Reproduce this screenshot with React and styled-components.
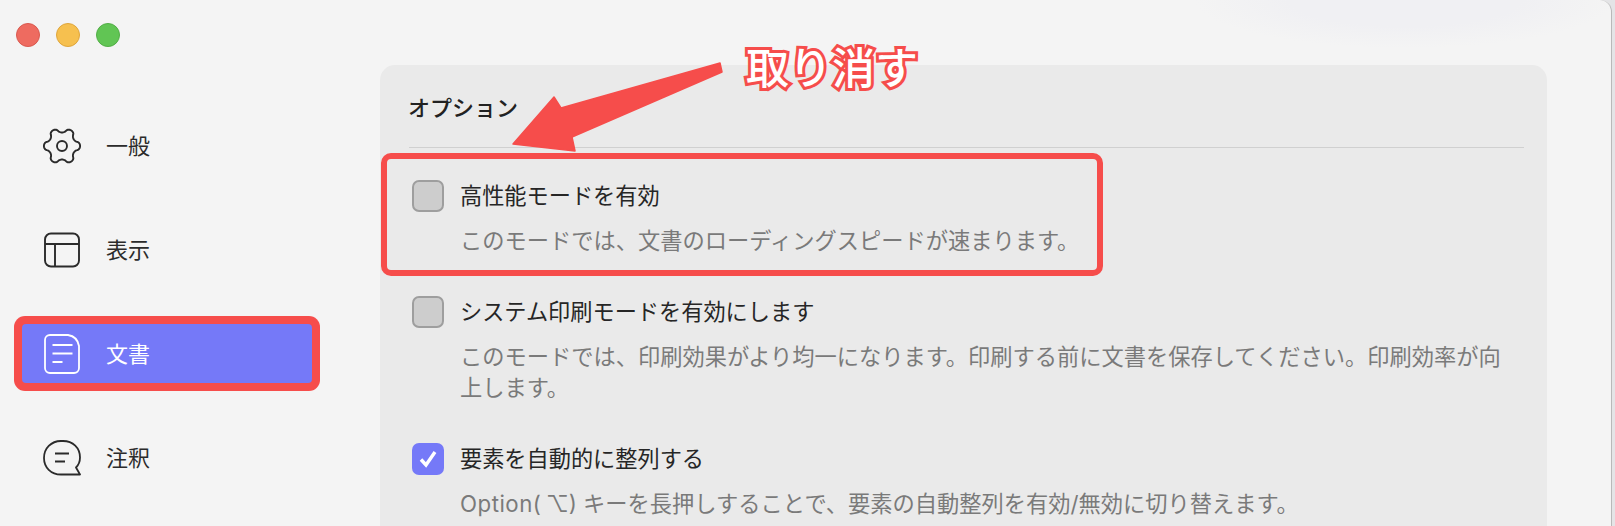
import React from 'react';
import styled, { createGlobalStyle } from 'styled-components';

const GlobalStyle = createGlobalStyle`
  html, body {
    margin: 0;
    background: #e4e4e6;
    overflow: hidden;
  }
  * {
    box-sizing: border-box;
  }
`;

const Page = styled.div`
  position: relative;
  width: 1612px;
  height: 526px;
  display: flex;
  overflow: hidden;
  background: radial-gradient(ellipse 210px 48px at 1405px 0, #f0f0f3 55%, #f4f4f4 100%), #f4f4f4;
  border-right: 1px solid #b9b9b9;
  border-top-right-radius: 12px;
  font-family: Inter, "Noto Sans CJK JP", "DejaVu Sans", sans-serif;
  font-size: 22px;
`;

const Sidebar = styled.aside`
  width: 380px;
  flex-shrink: 0;
  padding-top: 23px;
`;

const TrafficLights = styled.div`
  display: flex;
  gap: 16px;
  padding-left: 16px;
  margin-bottom: 69px;
`;

const Light = styled.span`
  width: 24px;
  height: 24px;
  border-radius: 50%;
  background: ${props => props.$fill};
  border: 1px solid ${props => props.$edge};
`;

const Nav = styled.nav`
  display: flex;
  flex-direction: column;
  gap: 45px;
  width: 290px;
  margin-left: 22px;
`;

const NavItem = styled.div`
  height: 59px;
  display: flex;
  align-items: center;
  gap: 25px;
  padding-left: 21px;
  color: ${props => props.$active ? '#fff' : '#2b2b2b'};
  background: ${props => props.$active ? '#7579f8' : 'transparent'};
  border-radius: 4px;
  box-shadow: ${props => props.$active ? '0 0 0 8px #f64d4b' : 'none'};
`;

const NavLabel = styled.span`
  margin-bottom: 4px;
`;

const IconBox = styled.span`
  width: 38px;
  height: 40px;
  display: flex;
  align-items: center;
  justify-content: center;
  flex-shrink: 0;
  color: ${props => props.$active ? '#fff' : '#2b2b2b'};
`;

const Panel = styled.main`
  width: 1167px;
  height: 600px;
  margin-top: 65px;
  background: #eaeaea;
  border-radius: 15px;
`;

const PanelTitle = styled.h2`
  margin: 0;
  height: 82px;
  padding: 28px 0 0 28px;
  font-size: 22px;
  line-height: 30px;
  font-weight: 500;
  color: #222;
`;

const Divider = styled.div`
  height: 1px;
  margin: 0 23px 0 29px;
  background: #d0d0d0;
`;

const Options = styled.div`
  display: flex;
  flex-direction: column;
  gap: 40px;
  padding: 32px 0 0 32px;
`;

const OptionRow = styled.div`
  position: relative;
  display: grid;
  grid-template-columns: 32px 1fr;
  column-gap: 16px;
`;

const Checkbox = styled.span`
  width: 32px;
  height: 32px;
  display: flex;
  align-items: center;
  justify-content: center;
  border-radius: 7px;
  background: ${props => props.$checked ? '#7579f8' : '#cdcdcd'};
  border: ${props => props.$checked ? 'none' : '2px solid #9e9e9e'};
`;

const OptionLabel = styled.div`
  font-size: 22.2px;
  line-height: 32px;
  color: #262626;
`;

const OptionDesc = styled.div`
  grid-column: 2;
  max-width: 1060px;
  margin-top: 13px;
  font-size: 22.25px;
  line-height: 31px;
  color: #7a7a7a;
`;

const OptionWord = styled.span`
  letter-spacing: 0.5px;
`;

const OptionKey = styled.span`
  margin-left: 4.500px;
`;

// red frame the screenshot author drew round the first option
const Highlight = styled.div`
  position: absolute;
  top: -27px;
  left: -31px;
  width: 722px;
  height: 123px;
  border: 6px solid #f64d4b;
  border-radius: 10px;
  pointer-events: none;
`;

const Arrow = styled.svg`
  position: absolute;
  top: 0;
  left: 0;
  pointer-events: none;
`;

const Callout = styled.div`
  position: absolute;
  top: 37px;
  left: 746px;
  font-size: 43px;
  line-height: 62px;
  font-weight: 500;
  color: #fff;
  -webkit-text-stroke: 6px #f64d4b;
  paint-order: stroke fill;
`;

// six rounded lobes, sampled round the centre of the icon
const gearPath = () => {
  const points = [];
  for (let i = 0; i < 144; i++) {
    const angle = (i / 144) * Math.PI * 2;
    const wave = Math.cos(angle * 6);
    const r = 15.8 + 2.300 * Math.sign(wave) * Math.pow(Math.abs(wave), 0.6);
    points.push(`${(19 + r * Math.cos(angle)).toFixed(2)} ${(18 + r * Math.sin(angle)).toFixed(2)}`);
  }
  return `M${points.join('L')}Z`;
};

const GearIcon = () => (
  <svg width="38" height="36" viewBox="0 0 38 36" fill="none" stroke="currentColor" strokeWidth="1.900">
    <path d={gearPath()} strokeLinejoin="round" />
    <circle cx="19" cy="18" r="5" />
  </svg>
);

const LayoutIcon = () => (
  <svg width="38" height="36" viewBox="0 0 38 36" fill="none" stroke="currentColor" strokeWidth="1.900">
    <rect x="2" y="1.500" width="34" height="33" rx="6" />
    <path d="M2 12h34M12 12v22.500" />
  </svg>
);

const DocIcon = () => (
  <svg width="38" height="40" viewBox="0 0 38 40" fill="none" stroke="currentColor" strokeWidth="1.800">
    <path d="M7 1h18C31 2 35 6 36 12v22a5 5 0 0 1-5 5H7a5 5 0 0 1-5-5V6a5 5 0 0 1 5-5z" strokeLinejoin="round" />
    <path d="M9.500 11h20M9.500 19.500h20M9.500 28h10" />
  </svg>
);

const CommentIcon = () => (
  <svg width="38" height="36" viewBox="0 0 38 36" fill="none" stroke="currentColor" strokeWidth="1.800">
    <path d="M37 34.500H18C8 34.500 1 27.500 1 18S8 1 18 1h2c10 0 17 7 17 16.500 0 4-1 7-4 10l4 7z" strokeLinejoin="round" />
    <path d="M12 13.500h14M12 21.500h10" />
  </svg>
);

const CheckMark = () => (
  <svg width="20" height="20" viewBox="0 0 20 20" fill="none" stroke="#fff" strokeWidth="3.400">
    <path d="M3 10.500l5 5.500 9-13" />
  </svg>
);

const navItems = [
  { label: '一般', icon: <GearIcon /> },
  { label: '表示', icon: <LayoutIcon /> },
  { label: '文書', icon: <DocIcon />, active: true },
  { label: '注釈', icon: <CommentIcon /> },
];

const options = [
  {
    label: '高性能モードを有効',
    desc: 'このモードでは、文書のローディングスピードが速まります。',
    marked: true,
  },
  {
    label: 'システム印刷モードを有効にします',
    desc: 'このモードでは、印刷効果がより均一になります。印刷する前に文書を保存してください。印刷効率が向上します。',
  },
  {
    label: '要素を自動的に整列する',
    desc: <><OptionWord>Option(</OptionWord><OptionKey>⌥</OptionKey>) キーを長押しすることで、要素の自動整列を有効/無効に切り替えます。</>,
    checked: true,
  },
];

const App = () => {
  return (
    <Page>
      <GlobalStyle />
      <Sidebar>
        <TrafficLights>
          <Light $fill="#ee6b60" $edge="#d9594f" />
          <Light $fill="#f6c04f" $edge="#dfa63c" />
          <Light $fill="#61c554" $edge="#52ae46" />
        </TrafficLights>
        <Nav>
          {navItems.map(item => (
            <NavItem key={item.label} $active={item.active}>
              <IconBox $active={item.active}>{item.icon}</IconBox>
              <NavLabel>{item.label}</NavLabel>
            </NavItem>
          ))}
        </Nav>
      </Sidebar>
      <Panel>
        <PanelTitle>オプション</PanelTitle>
        <Divider />
        <Options>
          {options.map(option => (
            <OptionRow key={option.label}>
              <Checkbox $checked={option.checked}>{option.checked ? <CheckMark /> : null}</Checkbox>
              <OptionLabel>{option.label}</OptionLabel>
              <OptionDesc>{option.desc}</OptionDesc>
              {option.marked ? <Highlight /> : null}
            </OptionRow>
          ))}
        </Options>
      </Panel>
      <Arrow width="1612" height="526" viewBox="0 0 1612 526">
        <path
          d="M720 63L722 72L572 137L575 151L513 144L554 97L561 108Z"
          fill="#f64d4b"
          stroke="#f64d4b"
          strokeWidth="1.500"
          strokeLinejoin="round"
        />
      </Arrow>
      <Callout>取り消す</Callout>
    </Page>
  );
};

export default App;
